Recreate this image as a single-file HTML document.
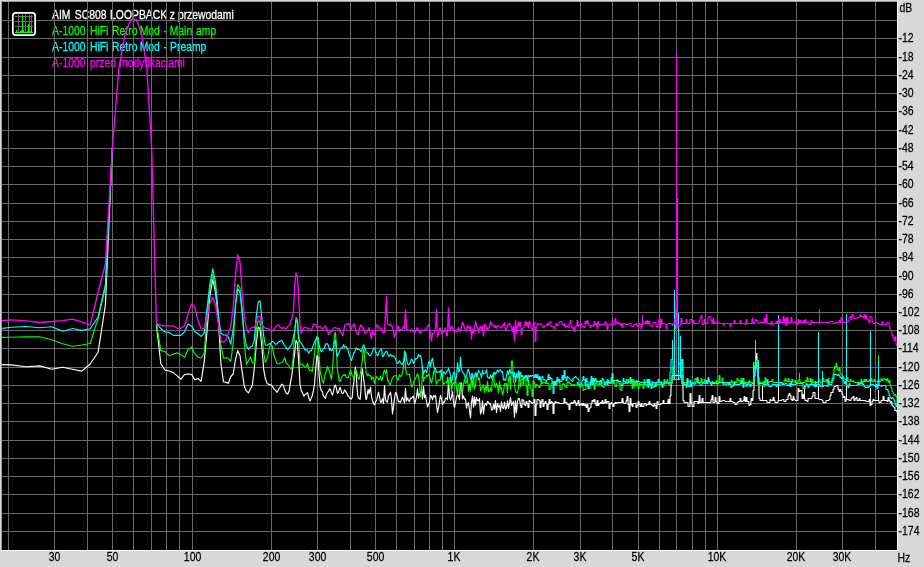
<!DOCTYPE html>
<html lang="pl"><head><meta charset="utf-8"><title>Spectrum</title>
<style>
html,body{margin:0;padding:0;background:#d8d8d8;overflow:hidden}
svg{display:block;will-change:transform}
text{font-family:"Liberation Sans",Arial,sans-serif;font-size:13px}
</style></head><body>
<svg width="924" height="567" viewBox="0 0 924 567">
<rect x="0" y="0" width="924" height="567" fill="#d8d8d8"/>
<rect x="1" y="1" width="897" height="550" fill="#ffffff"/>
<rect x="1" y="1" width="896" height="549" fill="#9a9a9a"/>
<rect x="2" y="2" width="895" height="548" fill="#000000"/>
<defs><clipPath id="plot"><rect x="2" y="2" width="895" height="548"/></clipPath></defs>
<g clip-path="url(#plot)">
<text transform="translate(0,19) scale(0.797,1)" fill="#ffffff" stroke="#ffffff" stroke-width="0.3"><tspan x="65.37">AIM</tspan> <tspan x="93.85">SC808</tspan> <tspan x="138.14">LOOPBACK</tspan> <tspan x="212.92">z</tspan> <tspan x="223.21">przewodami</tspan></text>
<text transform="translate(0,35) scale(0.797,1)" fill="#00ff00" stroke="#00ff00" stroke-width="0.3"><tspan x="65.37">A-1000</tspan> <tspan x="112.92">HiFi</tspan> <tspan x="140.65">Retro</tspan> <tspan x="175.28">Mod</tspan> <tspan x="205.27">-</tspan> <tspan x="212.92">Main</tspan> <tspan x="246.05">amp</tspan></text>
<text transform="translate(0,51) scale(0.797,1)" fill="#00ffff" stroke="#00ffff" stroke-width="0.3"><tspan x="65.37">A-1000</tspan> <tspan x="112.92">HiFi</tspan> <tspan x="140.65">Retro</tspan> <tspan x="175.28">Mod</tspan> <tspan x="205.27">-</tspan> <tspan x="213.43">Preamp</tspan></text>
<text transform="translate(0,67) scale(0.797,1)" fill="#ff00ff" stroke="#ff00ff" stroke-width="0.3"><tspan x="65.37">A-1000</tspan> <tspan x="112.92">przed</tspan> <tspan x="149.56">modyfikacjami</tspan></text>
<path d="M8.5 2V550M54.5 2V550M87.5 2V550M112.5 2V550M133.5 2V550M151.5 2V550M166.5 2V550M179.5 2V550M192.5 2V550M271.5 2V550M317.5 2V550M350.5 2V550M375.5 2V550M396.5 2V550M414.5 2V550M429.5 2V550M442.5 2V550M454.5 2V550M533.5 2V550M580.5 2V550M612.5 2V550M638.5 2V550M659.5 2V550M676.5 2V550M692.5 2V550M705.5 2V550M717.5 2V550M796.5 2V550M842.5 2V550M875.5 2V550M2 20.5H897M2 38.5H897M2 57.5H897M2 75.5H897M2 93.5H897M2 111.5H897M2 130.5H897M2 148.5H897M2 166.5H897M2 184.5H897M2 203.5H897M2 221.5H897M2 239.5H897M2 257.5H897M2 276.5H897M2 294.5H897M2 312.5H897M2 330.5H897M2 348.5H897M2 367.5H897M2 385.5H897M2 403.5H897M2 421.5H897M2 440.5H897M2 458.5H897M2 476.5H897M2 494.5H897M2 513.5H897M2 531.5H897" stroke="#6a6a6a" stroke-width="1" fill="none" shape-rendering="crispEdges"/>
<polyline points="-6.5,364.3 11.1,364.9 26.3,366.8 39.7,365.9 51.8,369.2 62.7,367.2 72.6,369.2 81.7,371.1 90.2,364.0 98.1,352.2 105.4,305.0 112.3,148.5" fill="none" stroke="#ffffff" stroke-width="1.15" stroke-linejoin="round"/>
<polyline points="156.4,325.0 160.8,363.5 165.1,370.3 169.3,371.0 173.3,372.6 177.2,375.9 180.9,379.2 184.5,374.6 188.0,374.0 191.5,374.2 194.8,379.8 198.0,378.5 201.1,381.4 204.2,362.2 207.1,330.0 210.0,295.0 212.8,279.4 215.6,293.0 218.3,318.0 220.9,363.5 223.5,381.8 226.0,382.4 228.4,383.3 230.8,376.5 233.2,374.0 235.5,359.6 237.7,350.4 240.0,355.7 242.1,371.3 244.3,386.3 246.4,390.9 248.4,392.9 250.4,389.0 252.4,385.0 254.4,367.4 256.3,344.0 258.2,327.0 260.0,328.6 261.9,346.7 263.7,369.5 265.4,378.8 267.2,383.6 268.9,384.4 270.6,384.7 272.2,386.0 273.9,388.8 275.5,390.4 277.1,392.3 278.7,389.2 280.2,387.0 281.8,384.1 283.3,385.4 284.8,390.1 286.2,393.1 287.7,394.1 289.1,391.1 290.5,382.6 291.9,374.8 293.3,363.0 294.7,353.1 296.0,340.3 297.4,342.7 298.7,361.6 300.0,384.4 301.3,390.9 302.6,393.1 303.8,396.1 305.1,394.6 306.3,393.9 307.5,392.7 308.7,397.5 309.9,400.9 311.1,398.5 312.3,395.6 313.4,390.6 314.6,383.4 315.7,369.9 316.9,355.7 318.0,357.2 319.1,375.0 320.2,387.1 321.2,390.3 322.3,391.7 323.4,395.8 324.4,397.1 325.5,398.3 326.5,394.3 327.5,392.5 328.5,391.2 329.5,388.9 330.5,389.7 331.5,392.9 332.5,394.9 333.5,391.3 334.4,386.7 335.4,385.1 336.4,388.2 337.3,393.2 338.2,392.8 339.1,389.9 340.1,387.3 341.0,390.0 341.9,393.3 342.8,393.4 343.7,392.5 344.5,389.8 345.4,391.2 346.3,392.4 347.1,393.8 348.0,396.0 348.8,396.4 349.7,398.1 350.5,398.2 351.4,399.1 352.2,397.3 353.0,387.9 353.8,382.8 354.6,375.5 355.4,367.1 356.2,373.4 357.0,387.6 357.8,395.8 358.6,398.2 359.3,398.4 360.1,399.5 360.9,391.0 361.6,374.5 362.4,368.7 363.1,375.0 363.9,380.8 364.6,385.4 365.4,394.4 366.1,399.6 366.8,398.0 367.5,392.6 368.2,389.5 369.0,393.9 370.5,387.4 371.5,396.3 372.5,400.9 373.5,403.0 374.5,405.0 375.5,402.0 376.5,400.6 377.5,396.6 378.5,392.2 379.5,397.0 380.5,402.3 381.5,401.9 382.5,398.5 383.5,403.5 384.5,385.7 385.5,399.4 386.5,401.7 387.5,402.0 388.5,395.2 389.5,394.6 390.5,392.1 391.5,399.3 392.5,413.9 393.5,406.3 394.5,398.6 395.5,392.6 396.5,393.4 397.5,397.8 398.5,401.8 399.5,401.4 400.5,402.4 401.5,399.6 402.5,397.1 403.5,399.5 404.5,403.2 405.5,388.3 406.5,401.2 407.5,398.0 408.5,400.3 409.5,401.6 410.5,398.2 411.5,398.5 412.5,397.2 413.5,396.0 414.5,403.4 415.5,401.2 416.5,396.8 417.5,388.9 418.5,398.2 419.5,393.6 420.5,393.1 421.5,389.6 422.5,399.0 423.5,386.4 424.5,397.6 425.5,395.2 426.5,401.3 427.5,406.8 428.5,404.8 429.5,402.0 430.5,395.3 431.5,396.3 432.5,399.8 433.5,395.6 434.5,396.9 435.5,395.4 436.5,404.1 437.5,412.4 438.5,407.7 439.5,401.4 440.5,395.3 441.5,399.1 442.5,404.7 443.5,402.0 444.5,402.3 445.5,398.6 446.5,398.0 447.5,399.7 448.5,380.5 449.5,397.2 450.5,400.1 451.5,396.9 452.5,391.7 453.5,402.5 454.5,407.6 455.5,402.5 456.5,397.5 457.5,394.2 458.5,395.6 459.5,399.8 460.5,383.0 461.5,383.0 462.5,398.8 463.5,395.9 464.5,399.3 465.5,399.0 466.5,408.1 467.5,404.1 468.5,402.6 469.5,410.2 470.5,417.8 471.5,402.0 472.5,396.1 473.5,407.2 474.5,396.9 475.5,405.1 476.5,397.6 477.5,400.4 478.5,401.0 479.5,398.4 480.5,414.0 481.5,411.1 482.5,400.8 483.5,414.0 484.5,405.5 485.5,403.6 486.5,405.3 487.5,401.4 488.5,402.3 489.5,404.1 490.5,403.7 491.5,410.0 492.5,409.8 493.5,404.3 494.5,409.2 495.5,400.6 496.5,412.7 497.5,403.5 498.5,407.2 499.5,405.2 500.5,411.4 501.5,401.8 502.5,407.6 503.5,408.6 504.5,402.2 505.5,409.1 506.5,407.5 507.5,400.9 508.5,408.5 509.5,403.1 510.5,397.6 511.5,405.4 512.5,403.4 513.5,401.3 514.5,417.2 515.5,400.8 516.5,412.7 517.5,400.7 518.5,398.3 519.5,398.9 520.5,405.9" fill="none" stroke="#ffffff" stroke-width="1.15" stroke-linejoin="round"/>
<polyline points="520.1,405.5 520.9,405.5 521.1,407.5 521.9,407.5 522.1,399.5 522.9,399.5 523.1,400.5 523.9,400.5 524.1,404.5 524.9,404.5 525.1,405.5 525.9,405.5 526.1,401.5 526.9,401.5 527.1,403.5 527.9,403.5 528.1,407.5 528.9,407.5 529.1,400.5 529.9,400.5 530.1,401.5 530.9,401.5 531.1,402.5 531.9,402.5 532.1,403.5 532.9,403.5 533.1,402.5 533.9,402.5 534.1,399.5 534.9,399.5 535.1,415.5 535.9,415.5 536.1,404.5 536.9,404.5 537.1,399.5 537.9,399.5 538.1,399.5 538.9,399.5 539.1,400.5 539.9,400.5 540.1,407.5 540.9,407.5 541.1,401.5 541.9,401.5 542.1,399.5 542.9,399.5 543.1,406.5 543.9,406.5 544.1,403.5 544.9,403.5 545.1,401.5 545.9,401.5 546.1,403.5 546.9,403.5 547.1,409.5 547.9,409.5 548.1,404.5 548.9,404.5 549.1,399.5 549.9,399.5 550.1,403.5 550.9,403.5 551.1,401.5 551.9,401.5 552.1,402.5 552.9,402.5 553.1,413.5 553.9,413.5 554.1,403.5 554.9,403.5 555.1,401.5 555.9,401.5 556.1,402.5 556.9,402.5 557.1,402.5 557.9,402.5 558.1,402.5 558.9,402.5 559.1,403.5 559.9,403.5 560.1,403.5 560.9,403.5 561.1,403.5 561.9,403.5 562.1,403.5 562.9,403.5 563.1,403.5 563.9,403.5 564.1,398.5 564.9,398.5 565.1,402.5 565.9,402.5 566.1,402.5 566.9,402.5 567.1,404.5 567.9,404.5 568.1,404.5 568.9,404.5 569.1,409.5 569.9,409.5 570.1,403.5 570.9,403.5 571.1,402.5 571.9,402.5 572.1,403.5 572.9,403.5 573.1,402.5 573.9,402.5 574.1,400.5 574.9,400.5 575.1,402.5 575.9,402.5 576.1,405.5 576.9,405.5 577.1,403.5 577.9,403.5 578.1,400.5 578.9,400.5 579.1,405.5 579.9,405.5 580.1,404.5 580.9,404.5 581.1,403.5 581.9,403.5 582.1,405.5 582.9,405.5 583.1,403.5 583.9,403.5 584.1,405.5 584.9,405.5 585.1,404.5 585.9,404.5 586.1,407.5 586.9,407.5 587.1,404.5 587.9,404.5 588.1,411.5 588.9,411.5 589.1,408.5 589.9,408.5 590.1,407.5 590.9,407.5 591.1,403.5 591.9,403.5 592.1,400.5 592.9,400.5 593.1,401.5 593.9,401.5 594.1,399.5 594.9,399.5 595.1,403.5 595.9,403.5 596.1,405.5 596.9,405.5 597.1,400.5 597.9,400.5 598.1,405.5 598.9,405.5 599.1,403.5 599.9,403.5 600.1,402.5 600.9,402.5 601.1,403.5 601.9,403.5 602.1,400.5 602.9,400.5 603.1,403.5 603.9,403.5 604.1,402.5 604.9,402.5 605.1,399.5 605.9,399.5 606.1,403.5 606.9,403.5 607.1,401.5 607.9,401.5 608.1,401.5 608.9,401.5 609.1,408.5 609.9,408.5 610.1,403.5 610.9,403.5 611.1,402.5 611.9,402.5 612.1,404.5 612.9,404.5 613.1,406.5 613.9,406.5 614.1,403.5 614.9,403.5 615.1,402.5 615.9,402.5 616.1,403.5 616.9,403.5 617.1,402.5 617.9,402.5 618.1,402.5 618.9,402.5 619.1,402.5 619.9,402.5 620.1,402.5 620.9,402.5 621.1,402.5 621.9,402.5 622.1,398.5 622.9,398.5 623.1,402.5 623.9,402.5 624.1,403.5 624.9,403.5 625.1,403.5 625.9,403.5 626.1,400.5 626.9,400.5 627.1,396.5 627.9,396.5 628.1,404.5 628.9,404.5 629.1,411.5 629.9,411.5 630.1,398.5 630.9,398.5 631.1,404.5 631.9,404.5 632.1,406.5 632.9,406.5 633.1,403.5 633.9,403.5 634.1,403.5 634.9,403.5 635.1,403.5 635.9,403.5 636.1,407.5 636.9,407.5 637.1,405.5 637.9,405.5 638.1,401.5 638.9,401.5 639.1,404.5 639.9,404.5 640.1,406.5 640.9,406.5 641.1,403.5 641.9,403.5 642.1,406.5 642.9,406.5 643.1,406.5 643.9,406.5 644.1,403.5 644.9,403.5 645.1,403.5 645.9,403.5 646.1,405.5 646.9,405.5 647.1,404.5 647.9,404.5 648.1,404.5 648.9,404.5 649.1,401.5 649.9,401.5 650.1,404.5 650.9,404.5 651.1,404.5 651.9,404.5 652.1,405.5 652.9,405.5 653.1,406.5 653.9,406.5 654.1,403.5 654.9,403.5 655.1,405.5 655.9,405.5 656.1,408.5 656.9,408.5 657.1,401.5 657.9,401.5 658.1,404.5 658.9,404.5 659.1,404.5 659.9,404.5 660.1,404.5 660.9,404.5 661.1,403.5 661.9,403.5 662.1,403.5 662.9,403.5 663.1,400.5 663.9,400.5 664.1,403.5 664.9,403.5 665.1,403.5 665.9,403.5 666.1,403.5 666.9,403.5 667.1,403.5 667.9,403.5 668.1,399.5 668.9,399.5 669.1,403.5 669.9,403.5 670.1,395.5 670.9,395.5 671.1,383.5 671.9,383.5 672.1,375.5 672.9,375.5 673.1,375.5 673.9,375.5 674.1,375.5 674.9,375.5 675.1,375.5 675.9,375.5 676.1,375.5 676.9,375.5 677.1,375.5 677.9,375.5 678.1,375.5 678.9,375.5 679.1,375.5 679.9,375.5 680.1,375.5 680.9,375.5 681.1,375.5 681.9,375.5 682.1,383.5 682.9,383.5 683.1,400.5 683.9,400.5 684.1,402.5 684.9,402.5 685.1,402.5 685.9,402.5 686.1,402.5 686.9,402.5 687.1,402.5 687.9,402.5 688.1,406.5 688.9,406.5 689.1,406.5 689.9,406.5 690.1,393.5 690.9,393.5 691.1,402.5 691.9,402.5 692.1,406.5 692.9,406.5 693.1,406.5 693.9,406.5 694.1,401.5 694.9,401.5 695.1,401.5 695.9,401.5 696.1,401.5 696.9,401.5 697.1,401.5 697.9,401.5 698.1,403.5 698.9,403.5 699.1,395.5 699.9,395.5 700.1,402.5 700.9,402.5 701.1,402.5 701.9,402.5 702.1,398.5 702.9,398.5 703.1,402.5 703.9,402.5 704.1,402.5 704.9,402.5 705.1,402.5 705.9,402.5 706.1,402.5 706.9,402.5 707.1,402.5 707.9,402.5 708.1,402.5 708.9,402.5 709.1,402.5 709.9,402.5 710.1,402.5 710.9,402.5 711.1,399.5 711.9,399.5 712.1,395.5 712.9,395.5 713.1,402.5 713.9,402.5 714.1,402.5 714.9,402.5 715.1,397.5 715.9,397.5 716.1,401.5 716.9,401.5 717.1,403.5 717.9,403.5 718.1,403.5 718.9,403.5 719.1,396.5 719.9,396.5 720.1,401.5 720.9,401.5 721.1,401.5 721.9,401.5 722.1,400.5 722.9,400.5 723.1,400.5 723.9,400.5 724.1,400.5 724.9,400.5 725.1,401.5 725.9,401.5 726.1,401.5 726.9,401.5 727.1,401.5 727.9,401.5 728.1,401.5 728.9,401.5 729.1,401.5 729.9,401.5 730.1,398.5 730.9,398.5 731.1,401.5 731.9,401.5 732.1,401.5 732.9,401.5 733.1,402.5 733.9,402.5 734.1,402.5 734.9,402.5 735.1,404.5 735.9,404.5 736.1,404.5 736.9,404.5 737.1,402.5 737.9,402.5 738.1,401.5 738.9,401.5 739.1,401.5 739.9,401.5 740.1,398.5 740.9,398.5 741.1,401.5 741.9,401.5 742.1,401.5 742.9,401.5 743.1,400.5 743.9,400.5 744.1,396.5 744.9,396.5 745.1,401.5 745.9,401.5 746.1,397.5 746.9,397.5 747.1,401.5 747.9,401.5 748.1,401.5 748.9,401.5 749.1,405.5 749.9,405.5 750.1,404.5 750.9,404.5 751.1,398.5 751.9,398.5 752.1,400.5 752.9,400.5 753.1,390.5 753.9,390.5 754.1,376.5 754.9,376.5 755.1,365.5 755.9,365.5 756.1,353.5 756.9,353.5 757.1,368.5 757.9,368.5 758.1,377.5 758.9,377.5 759.1,398.5 759.9,398.5 760.1,400.5 760.9,400.5 761.1,400.5 761.9,400.5 762.1,400.5 762.9,400.5 763.1,400.5 763.9,400.5 764.1,400.5 764.9,400.5 765.1,400.5 765.9,400.5 766.1,400.5 766.9,400.5 767.1,402.5 767.9,402.5 768.1,402.5 768.9,402.5 769.1,402.5 769.9,402.5 770.1,399.5 770.9,399.5 771.1,400.5 771.9,400.5 772.1,400.5 772.9,400.5 773.1,397.5 773.9,397.5 774.1,400.5 774.9,400.5 775.1,402.5 775.9,402.5 776.1,402.5 776.9,402.5 777.1,402.5 777.9,402.5 778.1,400.5 778.9,400.5 779.1,400.5 779.9,400.5 780.1,400.5 780.9,400.5 781.1,400.5 781.9,400.5 782.1,399.5 782.9,399.5 783.1,399.5 783.9,399.5 784.1,401.5 784.9,401.5 785.1,401.5 785.9,401.5 786.1,399.5 786.9,399.5 787.1,399.5 787.9,399.5 788.1,395.5 788.9,395.5 789.1,393.5 789.9,393.5 790.1,395.5 790.9,395.5 791.1,399.5 791.9,399.5 792.1,400.5 792.9,400.5 793.1,396.5 793.9,396.5 794.1,399.5 794.9,399.5 795.1,400.5 795.9,400.5 796.1,400.5 796.9,400.5 797.1,400.5 797.9,400.5 798.1,388.5 798.9,388.5 799.1,391.5 799.9,391.5 800.1,390.5 800.9,390.5 801.1,390.5 801.9,390.5 802.1,398.5 802.9,398.5 803.1,394.5 803.9,394.5 804.1,398.5 804.9,398.5 805.1,400.5 805.9,400.5 806.1,400.5 806.9,400.5 807.1,401.5 807.9,401.5 808.1,398.5 808.9,398.5 809.1,398.5 809.9,398.5 810.1,398.5 810.9,398.5 811.1,398.5 811.9,398.5 812.1,396.5 812.9,396.5 813.1,392.5 813.9,392.5 814.1,392.5 814.9,392.5 815.1,398.5 815.9,398.5 816.1,398.5 816.9,398.5 817.1,398.5 817.9,398.5 818.1,398.5 818.9,398.5 819.1,399.5 819.9,399.5 820.1,399.5 820.9,399.5 821.1,399.5 821.9,399.5 822.1,400.5 822.9,400.5 823.1,402.5 823.9,402.5 824.1,402.5 824.9,402.5 825.1,402.5 825.9,402.5 826.1,400.5 826.9,400.5 827.1,400.5 827.9,400.5 828.1,400.5 828.9,400.5 829.1,399.5 829.9,399.5 830.1,395.5 830.9,395.5 831.1,392.5 831.9,392.5 832.1,392.5 832.9,392.5 833.1,389.5 833.9,389.5 834.1,386.5 834.9,386.5 835.1,386.5 835.9,386.5 836.1,385.5 836.9,385.5 837.1,385.5 837.9,385.5 838.1,389.5 838.9,389.5 839.1,391.5 839.9,391.5 840.1,389.5 840.9,389.5 841.1,391.5 841.9,391.5 842.1,394.5 842.9,394.5 843.1,397.5 843.9,397.5 844.1,396.5 844.9,396.5 845.1,401.5 845.9,401.5 846.1,399.5 846.9,399.5 847.1,399.5 847.9,399.5 848.1,399.5 848.9,399.5 849.1,400.5 849.9,400.5 850.1,400.5 850.9,400.5 851.1,398.5 851.9,398.5 852.1,397.5 852.9,397.5 853.1,396.5 853.9,396.5 854.1,400.5 854.9,400.5 855.1,398.5 855.9,398.5 856.1,397.5 856.9,397.5 857.1,400.5 857.9,400.5 858.1,400.5 858.9,400.5 859.1,398.5 859.9,398.5 860.1,400.5 860.9,400.5 861.1,400.5 861.9,400.5 862.1,400.5 862.9,400.5 863.1,400.5 863.9,400.5 864.1,400.5 864.9,400.5 865.1,400.5 865.9,400.5 866.1,401.5 866.9,401.5 867.1,401.5 867.9,401.5 868.1,401.5 868.9,401.5 869.1,399.5 869.9,399.5 870.1,405.5 870.9,405.5 871.1,404.5 871.9,404.5 872.1,401.5 872.9,401.5 873.1,399.5 873.9,399.5 874.1,400.5 874.9,400.5 875.1,400.5 875.9,400.5 876.1,400.5 876.9,400.5 877.1,400.5 877.9,400.5 878.1,400.5 878.9,400.5 879.1,402.5 879.9,402.5 880.1,402.5 880.9,402.5 881.1,400.5 881.9,400.5 882.1,400.5 882.9,400.5 883.1,396.5 883.9,396.5 884.1,400.5 884.9,400.5 885.1,400.5 885.9,400.5 886.1,400.5 886.9,400.5 887.1,401.5 887.9,401.5 888.1,397.5 888.9,397.5 889.1,400.5 889.9,400.5 890.1,402.5 890.9,402.5 891.1,401.5 891.9,401.5 892.1,405.5 892.9,405.5 893.1,406.5 893.9,406.5 894.1,407.5 894.9,407.5 895.1,410.5 895.9,410.5 896.1,410.5 896.9,410.5 897.1,412.5 897.9,412.5" fill="none" stroke="#ffffff" stroke-width="1.15" stroke-linejoin="round"/>
<path d="M804.5 385.5V398.7M762.5 385.6V400.5M778.5 385.6V400.5M818.5 385.6V398.9M846.5 385.6V399.6M870.5 387.6V405.2M878.5 390.3V400.6" stroke="#ffffff" stroke-width="1" fill="none" shape-rendering="crispEdges"/>
<polyline points="-6.5,337.6 11.1,337.2 26.3,336.8 39.7,336.8 51.8,339.8 62.7,343.7 72.6,346.3 81.7,345.0 90.2,343.5 98.1,318.3 105.4,287.0 112.3,148.5" fill="none" stroke="#00ff00" stroke-width="1.15" stroke-linejoin="round"/>
<polyline points="156.4,323.3 160.8,350.4 165.1,351.7 169.3,355.9 173.3,354.1 177.2,352.7 180.9,354.8 184.5,357.4 188.0,349.8 191.5,347.2 194.8,353.7 198.0,357.0 201.1,358.0 204.2,353.0 207.1,316.0 210.0,288.0 212.8,274.2 215.6,288.0 218.3,313.5 220.9,345.2 223.5,358.3 226.0,357.6 228.4,358.3 230.8,361.5 233.2,342.6 235.5,303.0 237.7,284.6 240.0,288.0 242.1,309.6 244.3,342.6 246.4,364.2 248.4,360.9 250.4,357.0 252.4,362.8 254.4,363.5 256.3,329.0 258.2,321.0 260.0,321.0 261.9,336.5 263.7,352.9 265.4,362.3 267.2,358.5 268.9,350.5 270.6,343.9 272.2,345.8 273.9,355.1 275.5,359.6 277.1,363.7 278.7,364.0 280.2,362.8 281.8,362.7 283.3,360.5 284.8,357.6 286.2,363.0 287.7,364.3 289.1,366.0 290.5,368.6 291.9,368.7 293.3,356.6 294.7,330.6 296.0,317.4 297.4,319.8 298.7,338.7 300.0,364.8 301.3,364.3 302.6,364.0 303.8,366.1 305.1,367.1 306.3,366.6 307.5,363.2 308.7,368.8 309.9,370.5 311.1,370.3 312.3,371.7 313.4,362.7 314.6,352.7 315.7,342.6 316.9,336.3 318.0,337.8 319.1,355.6 320.2,372.2 321.2,376.1 322.3,380.6 323.4,383.2 324.4,377.3 325.5,372.9 326.5,370.9 327.5,366.5 328.5,368.7 329.5,371.2 330.5,376.4 331.5,379.4 332.5,368.7 333.5,354.5 334.4,335.1 335.4,332.4 336.4,345.2 337.3,369.0 338.2,374.1 339.1,380.8 340.1,381.6 341.0,378.9 341.9,376.6 342.8,375.7 343.7,374.7 344.5,375.3 345.4,374.5 346.3,377.4 347.1,377.5 348.0,378.0 348.8,376.1 349.7,372.8 350.5,369.9 351.4,372.8 352.2,375.8 353.0,376.0 353.8,379.5 354.6,374.6 355.4,369.8 356.2,370.4 357.0,372.1 357.8,376.6 358.6,379.1 359.3,379.2 360.1,374.5 360.9,370.1 361.6,365.5 362.4,360.2 363.1,350.4 363.9,348.5 364.6,357.4 365.4,365.2 366.1,372.4 366.8,374.5 367.5,375.8 368.2,373.7 369.0,375.4 370.5,375.6 371.5,379.5 372.5,376.9 373.5,377.6 374.5,383.4 375.5,379.3 376.5,376.7 377.5,377.3 378.5,379.6 379.5,379.4 380.5,376.3 381.5,380.7 382.5,379.0 383.5,372.2 384.5,370.3 385.5,373.6 386.5,369.4 387.5,380.6 388.5,380.6 389.5,384.0 390.5,384.8 391.5,380.6 392.5,378.3 393.5,376.4 394.5,375.7 395.5,375.7 396.5,376.3 397.5,379.9 398.5,379.9 399.5,374.7 400.5,376.5 401.5,375.5 402.5,372.6 403.5,366.8 404.5,350.9 405.5,367.4 406.5,374.1 407.5,374.3 408.5,374.5 409.5,374.0 410.5,380.6 411.5,386.9 412.5,386.4 413.5,382.4 414.5,379.7 415.5,379.0 416.5,375.9 417.5,373.7 418.5,376.3 419.5,384.6 420.5,397.0 421.5,390.4 422.5,366.0 423.5,381.3 424.5,377.6 425.5,377.7 426.5,375.2 427.5,376.3 428.5,374.4 429.5,376.2 430.5,380.0 431.5,383.0 432.5,378.6 433.5,372.6 434.5,368.9 435.5,377.6 436.5,384.3 437.5,382.0 438.5,379.6 439.5,380.1 440.5,379.7 441.5,369.9 442.5,379.4 443.5,384.2 444.5,383.5 445.5,382.3 446.5,382.7 447.5,377.1 448.5,384.4 449.5,377.6 450.5,378.1 451.5,391.4 452.5,384.1 453.5,382.5 454.5,384.6 455.5,378.0 456.5,387.8 457.5,395.4 458.5,385.0 459.5,382.6 460.5,383.2 461.5,389.8 462.5,390.8 463.5,384.3 464.5,378.9 465.5,383.5 466.5,382.0 467.5,377.8 468.5,391.4 469.5,384.3 470.5,391.2 471.5,373.5 472.5,387.0 473.5,378.3 474.5,388.9 475.5,386.1 476.5,373.1 477.5,373.9 478.5,379.8 479.5,378.0 480.5,390.8 481.5,388.1 482.5,387.0 483.5,384.7 484.5,392.5 485.5,386.3 486.5,390.8 487.5,381.3 488.5,391.5 489.5,391.8 490.5,387.8 491.5,391.4 492.5,378.1 493.5,372.3 494.5,385.9 495.5,387.2 496.5,383.0 497.5,385.8 498.5,393.0 499.5,381.3 500.5,388.6 501.5,387.6 502.5,394.9 503.5,391.7 504.5,383.6 505.5,384.1 506.5,383.5 507.5,393.0 508.5,378.4 509.5,376.4 510.5,389.6 511.5,361.0 512.5,361.0 513.5,382.6 514.5,383.7 515.5,391.4 516.5,392.6 517.5,393.0 518.5,387.7 519.5,372.0 520.5,386.4" fill="none" stroke="#00ff00" stroke-width="1.15" stroke-linejoin="round"/>
<polyline points="520.1,386.5 520.9,386.5 521.1,379.5 521.9,379.5 522.1,378.5 522.9,378.5 523.1,384.5 523.9,384.5 524.1,376.5 524.9,376.5 525.1,375.5 525.9,375.5 526.1,386.5 526.9,386.5 527.1,395.5 527.9,395.5 528.1,380.5 528.9,380.5 529.1,384.5 529.9,384.5 530.1,387.5 530.9,387.5 531.1,389.5 531.9,389.5 532.1,396.5 532.9,396.5 533.1,380.5 533.9,380.5 534.1,383.5 534.9,383.5 535.1,387.5 535.9,387.5 536.1,384.5 536.9,384.5 537.1,385.5 537.9,385.5 538.1,386.5 538.9,386.5 539.1,387.5 539.9,387.5 540.1,385.5 540.9,385.5 541.1,380.5 541.9,380.5 542.1,383.5 542.9,383.5 543.1,382.5 543.9,382.5 544.1,382.5 544.9,382.5 545.1,383.5 545.9,383.5 546.1,381.5 546.9,381.5 547.1,383.5 547.9,383.5 548.1,383.5 548.9,383.5 549.1,389.5 549.9,389.5 550.1,388.5 550.9,388.5 551.1,383.5 551.9,383.5 552.1,381.5 552.9,381.5 553.1,383.5 553.9,383.5 554.1,383.5 554.9,383.5 555.1,381.5 555.9,381.5 556.1,385.5 556.9,385.5 557.1,380.5 557.9,380.5 558.1,381.5 558.9,381.5 559.1,382.5 559.9,382.5 560.1,389.5 560.9,389.5 561.1,389.5 561.9,389.5 562.1,384.5 562.9,384.5 563.1,383.5 563.9,383.5 564.1,384.5 564.9,384.5 565.1,386.5 565.9,386.5 566.1,387.5 566.9,387.5 567.1,382.5 567.9,382.5 568.1,381.5 568.9,381.5 569.1,383.5 569.9,383.5 570.1,383.5 570.9,383.5 571.1,385.5 571.9,385.5 572.1,384.5 572.9,384.5 573.1,385.5 573.9,385.5 574.1,384.5 574.9,384.5 575.1,385.5 575.9,385.5 576.1,385.5 576.9,385.5 577.1,382.5 577.9,382.5 578.1,384.5 578.9,384.5 579.1,386.5 579.9,386.5 580.1,387.5 580.9,387.5 581.1,385.5 581.9,385.5 582.1,384.5 582.9,384.5 583.1,390.5 583.9,390.5 584.1,389.5 584.9,389.5 585.1,389.5 585.9,389.5 586.1,384.5 586.9,384.5 587.1,384.5 587.9,384.5 588.1,387.5 588.9,387.5 589.1,384.5 589.9,384.5 590.1,381.5 590.9,381.5 591.1,384.5 591.9,384.5 592.1,384.5 592.9,384.5 593.1,379.5 593.9,379.5 594.1,389.5 594.9,389.5 595.1,383.5 595.9,383.5 596.1,380.5 596.9,380.5 597.1,384.5 597.9,384.5 598.1,384.5 598.9,384.5 599.1,381.5 599.9,381.5 600.1,384.5 600.9,384.5 601.1,384.5 601.9,384.5 602.1,386.5 602.9,386.5 603.1,387.5 603.9,387.5 604.1,385.5 604.9,385.5 605.1,385.5 605.9,385.5 606.1,383.5 606.9,383.5 607.1,379.5 607.9,379.5 608.1,382.5 608.9,382.5 609.1,383.5 609.9,383.5 610.1,383.5 610.9,383.5 611.1,377.5 611.9,377.5 612.1,383.5 612.9,383.5 613.1,380.5 613.9,380.5 614.1,383.5 614.9,383.5 615.1,386.5 615.9,386.5 616.1,386.5 616.9,386.5 617.1,379.5 617.9,379.5 618.1,380.5 618.9,380.5 619.1,383.5 619.9,383.5 620.1,389.5 620.9,389.5 621.1,390.5 621.9,390.5 622.1,384.5 622.9,384.5 623.1,383.5 623.9,383.5 624.1,383.5 624.9,383.5 625.1,383.5 625.9,383.5 626.1,379.5 626.9,379.5 627.1,383.5 627.9,383.5 628.1,379.5 628.9,379.5 629.1,381.5 629.9,381.5 630.1,383.5 630.9,383.5 631.1,379.5 631.9,379.5 632.1,388.5 632.9,388.5 633.1,379.5 633.9,379.5 634.1,386.5 634.9,386.5 635.1,384.5 635.9,384.5 636.1,385.5 636.9,385.5 637.1,382.5 637.9,382.5 638.1,388.5 638.9,388.5 639.1,383.5 639.9,383.5 640.1,384.5 640.9,384.5 641.1,384.5 641.9,384.5 642.1,384.5 642.9,384.5 643.1,388.5 643.9,388.5 644.1,379.5 644.9,379.5 645.1,384.5 645.9,384.5 646.1,384.5 646.9,384.5 647.1,386.5 647.9,386.5 648.1,379.5 648.9,379.5 649.1,384.5 649.9,384.5 650.1,384.5 650.9,384.5 651.1,384.5 651.9,384.5 652.1,381.5 652.9,381.5 653.1,387.5 653.9,387.5 654.1,386.5 654.9,386.5 655.1,386.5 655.9,386.5 656.1,383.5 656.9,383.5 657.1,384.5 657.9,384.5 658.1,384.5 658.9,384.5 659.1,384.5 659.9,384.5 660.1,384.5 660.9,384.5 661.1,381.5 661.9,381.5 662.1,384.5 662.9,384.5 663.1,384.5 663.9,384.5 664.1,379.5 664.9,379.5 665.1,383.5 665.9,383.5 666.1,383.5 666.9,383.5 667.1,379.5 667.9,379.5 668.1,382.5 668.9,382.5 669.1,384.5 669.9,384.5 670.1,382.5 670.9,382.5 671.1,383.5 671.9,383.5 672.1,377.5 672.9,377.5 673.2,366.5 674.5,366.5 674.5,330.0 675.5,328.0 676.5,320.0 677.5,322.0 678.5,330.0 678.5,364.5 679.8,364.5 680.1,362.5 680.9,362.5 681.1,359.5 681.9,359.5 682.1,375.5 682.9,375.5 683.1,383.5 683.9,383.5 684.1,382.5 684.9,382.5 685.1,382.5 685.9,382.5 686.1,387.5 686.9,387.5 687.1,379.5 687.9,379.5 688.1,380.5 688.9,380.5 689.1,382.5 689.9,382.5 690.1,382.5 690.9,382.5 691.1,382.5 691.9,382.5 692.1,382.5 692.9,382.5 693.1,382.5 693.9,382.5 694.1,382.5 694.9,382.5 695.1,378.5 695.9,378.5 696.1,379.5 696.9,379.5 697.1,377.5 697.9,377.5 698.1,382.5 698.9,382.5 699.1,382.5 699.9,382.5 700.1,382.5 700.9,382.5 701.1,378.5 701.9,378.5 702.1,382.5 702.9,382.5 703.1,382.5 703.9,382.5 704.1,379.5 704.9,379.5 705.1,381.5 705.9,381.5 706.1,381.5 706.9,381.5 707.1,381.5 707.9,381.5 708.1,379.5 708.9,379.5 709.1,381.5 709.9,381.5 710.1,382.5 710.9,382.5 711.1,382.5 711.9,382.5 712.1,382.5 712.9,382.5 713.1,382.5 713.9,382.5 714.1,382.5 714.9,382.5 715.1,382.5 715.9,382.5 716.1,380.5 716.9,380.5 717.1,384.5 717.9,384.5 718.1,382.5 718.9,382.5 719.1,375.5 719.9,375.5 720.1,382.5 720.9,382.5 721.1,382.5 721.9,382.5 722.1,378.5 722.9,378.5 723.1,382.5 723.9,382.5 724.1,382.5 724.9,382.5 725.1,384.5 725.9,384.5 726.1,384.5 726.9,384.5 727.1,382.5 727.9,382.5 728.1,382.5 728.9,382.5 729.1,382.5 729.9,382.5 730.1,382.5 730.9,382.5 731.1,380.5 731.9,380.5 732.1,382.5 732.9,382.5 733.1,384.5 733.9,384.5 734.1,384.5 734.9,384.5 735.1,382.5 735.9,382.5 736.1,382.5 736.9,382.5 737.1,378.5 737.9,378.5 738.1,380.5 738.9,380.5 739.1,380.5 739.9,380.5 740.1,383.5 740.9,383.5 741.1,378.5 741.9,378.5 742.1,382.5 742.9,382.5 743.1,378.5 743.9,378.5 744.1,382.5 744.9,382.5 745.1,382.5 745.9,382.5 746.1,382.5 746.9,382.5 747.1,382.5 747.9,382.5 748.1,382.5 748.9,382.5 749.1,380.5 749.9,380.5 750.1,382.5 750.9,382.5 751.1,382.5 751.9,382.5 752.1,382.5 752.9,382.5 753.1,382.5 753.9,382.5 754.1,366.5 754.9,366.5 755.1,362.5 755.9,362.5 756.1,360.5 756.9,360.5 757.1,368.5 757.9,368.5 758.1,384.5 758.9,384.5 759.1,385.5 759.9,385.5 760.1,382.5 760.9,382.5 761.1,382.5 761.9,382.5 762.1,383.5 762.9,383.5 763.1,381.5 763.9,381.5 764.1,386.5 764.9,386.5 765.1,377.5 765.9,377.5 766.1,382.5 766.9,382.5 767.1,382.5 767.9,382.5 768.1,382.5 768.9,382.5 769.1,381.5 769.9,381.5 770.1,381.5 770.9,381.5 771.1,381.5 771.9,381.5 772.1,379.5 772.9,379.5 773.1,382.5 773.9,382.5 774.1,382.5 774.9,382.5 775.1,382.5 775.9,382.5 776.1,382.5 776.9,382.5 777.1,382.5 777.9,382.5 778.1,382.5 778.9,382.5 779.1,382.5 779.9,382.5 780.1,382.5 780.9,382.5 781.1,382.5 781.9,382.5 782.1,383.5 782.9,383.5 783.1,383.5 783.9,383.5 784.1,380.5 784.9,380.5 785.1,378.5 785.9,378.5 786.1,381.5 786.9,381.5 787.1,381.5 787.9,381.5 788.1,378.5 788.9,378.5 789.1,381.5 789.9,381.5 790.1,381.5 790.9,381.5 791.1,381.5 791.9,381.5 792.1,379.5 792.9,379.5 793.1,381.5 793.9,381.5 794.1,382.5 794.9,382.5 795.1,380.5 795.9,380.5 796.1,382.5 796.9,382.5 797.1,382.5 797.9,382.5 798.1,380.5 798.9,380.5 799.1,379.5 799.9,379.5 800.1,382.5 800.9,382.5 801.1,382.5 801.9,382.5 802.1,382.5 802.9,382.5 803.1,382.5 803.9,382.5 804.1,382.5 804.9,382.5 805.1,380.5 805.9,380.5 806.1,381.5 806.9,381.5 807.1,377.5 807.9,377.5 808.1,381.5 808.9,381.5 809.1,381.5 809.9,381.5 810.1,378.5 810.9,378.5 811.1,383.5 811.9,383.5 812.1,379.5 812.9,379.5 813.1,382.5 813.9,382.5 814.1,382.5 814.9,382.5 815.1,382.5 815.9,382.5 816.1,382.5 816.9,382.5 817.1,382.5 817.9,382.5 818.1,380.5 818.9,380.5 819.1,379.5 819.9,379.5 820.1,382.5 820.9,382.5 821.1,382.5 821.9,382.5 822.1,381.5 822.9,381.5 823.1,378.5 823.9,378.5 824.1,381.5 824.9,381.5 825.1,381.5 825.9,381.5 826.1,379.5 826.9,379.5 827.1,382.5 827.9,382.5 828.1,378.5 828.9,378.5 829.1,382.5 829.9,382.5 830.1,382.5 830.9,382.5 831.1,382.5 831.9,382.5 832.1,378.5 832.9,378.5 833.1,373.5 833.9,373.5 834.1,368.5 834.9,368.5 835.1,367.5 835.9,367.5 836.1,363.5 836.9,363.5 837.1,369.5 837.9,369.5 838.1,370.5 838.9,370.5 839.1,367.5 839.9,367.5 840.1,373.5 840.9,373.5 841.1,374.5 841.9,374.5 842.1,375.5 842.9,375.5 843.1,377.5 843.9,377.5 844.1,378.5 844.9,378.5 845.1,379.5 845.9,379.5 846.1,380.5 846.9,380.5 847.1,377.5 847.9,377.5 848.1,381.5 848.9,381.5 849.1,381.5 849.9,381.5 850.1,379.5 850.9,379.5 851.1,381.5 851.9,381.5 852.1,381.5 852.9,381.5 853.1,380.5 853.9,380.5 854.1,382.5 854.9,382.5 855.1,382.5 855.9,382.5 856.1,382.5 856.9,382.5 857.1,382.5 857.9,382.5 858.1,383.5 858.9,383.5 859.1,382.5 859.9,382.5 860.1,382.5 860.9,382.5 861.1,379.5 861.9,379.5 862.1,383.5 862.9,383.5 863.1,381.5 863.9,381.5 864.1,379.5 864.9,379.5 865.1,381.5 865.9,381.5 866.1,379.5 866.9,379.5 867.1,381.5 867.9,381.5 868.1,381.5 868.9,381.5 869.1,379.5 869.9,379.5 870.1,381.5 870.9,381.5 871.1,378.5 871.9,378.5 872.1,381.5 872.9,381.5 873.1,381.5 873.9,381.5 874.1,379.5 874.9,379.5 875.1,381.5 875.9,381.5 876.1,381.5 876.9,381.5 877.1,381.5 877.9,381.5 878.1,379.5 878.9,379.5 879.1,381.5 879.9,381.5 880.1,381.5 880.9,381.5 881.1,378.5 881.9,378.5 882.1,380.5 882.9,380.5 883.1,379.5 883.9,379.5 884.1,378.5 884.9,378.5 885.1,379.5 885.9,379.5 886.1,380.5 886.9,380.5 887.1,378.5 887.9,378.5 888.1,382.5 888.9,382.5 889.1,380.5 889.9,380.5 890.1,385.5 890.9,385.5 891.1,387.5 891.9,387.5 892.1,391.5 892.9,391.5 893.1,393.5 893.9,393.5 894.1,395.5 894.9,395.5 895.1,394.5 895.9,394.5 896.1,396.5 896.9,396.5 897.1,402.5 897.9,402.5" fill="none" stroke="#00ff00" stroke-width="1.15" stroke-linejoin="round"/>
<path d="M878.5 354.5V379.1M799.5 373.0V379.9M834.5 366.0V369.0" stroke="#00ff00" stroke-width="1" fill="none" shape-rendering="crispEdges"/>
<polyline points="-6.5,329.6 11.1,327.2 26.3,326.5 39.7,327.8 51.8,326.8 62.7,331.3 72.6,328.5 81.7,330.4 90.2,328.7 98.1,317.0 105.4,285.0 112.3,148.5" fill="none" stroke="#00ffff" stroke-width="1.15" stroke-linejoin="round"/>
<polyline points="156.4,323.3 160.8,328.5 165.1,332.0 169.3,332.4 173.3,335.4 177.2,335.4 180.9,335.4 184.5,331.8 188.0,323.9 191.5,325.9 194.8,331.5 198.0,333.7 201.1,336.3 204.2,333.1 207.1,308.0 210.0,283.0 212.8,268.9 215.6,283.0 218.3,316.1 220.9,333.1 223.5,335.0 226.0,335.0 228.4,337.0 230.8,344.2 233.2,329.2 235.5,305.7 237.7,288.5 240.0,292.6 242.1,312.2 244.3,334.4 246.4,345.5 248.4,349.4 250.4,346.8 252.4,346.1 254.4,339.6 256.3,316.1 258.2,301.7 260.0,300.9 261.9,319.0 263.7,336.3 265.4,345.0 267.2,345.3 268.9,343.9 270.6,343.9 272.2,341.1 273.9,342.4 275.5,344.3 277.1,343.6 278.7,341.8 280.2,341.3 281.8,340.3 283.3,343.4 284.8,345.8 286.2,347.6 287.7,349.8 289.1,347.9 290.5,346.6 291.9,344.0 293.3,337.6 294.7,331.5 296.0,320.7 297.4,322.0 298.7,337.6 300.0,342.0 301.3,343.1 302.6,345.9 303.8,347.3 305.1,350.4 306.3,349.5 307.5,350.5 308.7,353.4 309.9,350.8 311.1,350.8 312.3,348.3 313.4,344.9 314.6,342.0 315.7,339.6 316.9,337.6 318.0,337.8 319.1,345.1 320.2,349.0 321.2,351.8 322.3,350.8 323.4,348.5 324.4,348.2 325.5,344.5 326.5,343.5 327.5,344.0 328.5,345.5 329.5,350.5 330.5,348.4 331.5,350.6 332.5,350.0 333.5,347.7 334.4,341.5 335.4,340.0 336.4,352.6 337.3,356.6 338.2,354.0 339.1,352.7 340.1,349.3 341.0,348.7 341.9,347.6 342.8,347.4 343.7,344.5 344.5,347.2 345.4,346.8 346.3,346.5 347.1,348.7 348.0,349.9 348.8,353.6 349.7,355.7 350.5,358.6 351.4,360.4 352.2,358.0 353.0,355.6 353.8,352.6 354.6,352.7 355.4,349.4 356.2,347.7 357.0,349.6 357.8,349.0 358.6,349.2 359.3,349.6 360.1,350.4 360.9,351.5 361.6,350.4 362.4,347.5 363.1,345.7 363.9,344.8 364.6,347.8 365.4,348.6 366.1,352.7 366.8,352.8 367.5,352.8 368.2,353.4 369.0,355.4 370.5,355.6 371.5,353.6 372.5,351.4 373.5,348.6 374.5,348.1 375.5,351.3 376.5,353.7 377.5,355.8 378.5,354.0 379.5,350.8 380.5,350.3 381.5,348.7 382.5,356.4 383.5,356.4 384.5,353.3 385.5,352.1 386.5,351.0 387.5,353.2 388.5,355.9 389.5,356.3 390.5,354.3 391.5,355.9 392.5,355.6 393.5,355.9 394.5,357.1 395.5,358.6 396.5,361.7 397.5,363.6 398.5,362.2 399.5,360.7 400.5,362.7 401.5,364.1 402.5,364.6 403.5,361.5 404.5,356.7 405.5,351.9 406.5,358.9 407.5,363.6 408.5,364.8 409.5,364.3 410.5,362.1 411.5,358.8 412.5,360.1 413.5,363.5 414.5,361.8 415.5,358.4 416.5,358.9 417.5,358.2 418.5,354.5 419.5,356.4 420.5,355.4 421.5,359.4 422.5,369.2 423.5,374.0 424.5,371.1 425.5,370.0 426.5,372.5 427.5,368.7 428.5,362.8 429.5,360.9 430.5,366.7 431.5,360.5 432.5,358.3 433.5,364.9 434.5,368.5 435.5,368.5 436.5,372.5 437.5,372.1 438.5,371.8 439.5,372.1 440.5,370.3 441.5,373.8 442.5,378.2 443.5,371.6 444.5,372.7 445.5,374.1 446.5,371.9 447.5,371.4 448.5,368.2 449.5,371.3 450.5,374.9 451.5,382.9 452.5,377.6 453.5,372.6 454.5,372.2 455.5,379.9 456.5,377.3 457.5,362.7 458.5,371.8 459.5,371.5 460.5,357.0 461.5,369.2 462.5,372.4 463.5,373.2 464.5,374.9 465.5,378.6 466.5,376.0 467.5,370.9 468.5,369.2 469.5,373.7 470.5,379.5 471.5,378.6 472.5,373.5 473.5,378.8 474.5,376.2 475.5,372.7 476.5,377.2 477.5,373.9 478.5,370.3 479.5,372.2 480.5,373.9 481.5,377.6 482.5,370.1 483.5,374.1 484.5,373.4 485.5,373.2 486.5,369.5 487.5,377.4 488.5,377.5 489.5,378.5 490.5,374.9 491.5,378.1 492.5,375.1 493.5,376.6 494.5,372.3 495.5,374.1 496.5,372.4 497.5,370.1 498.5,372.0 499.5,369.9 500.5,369.9 501.5,372.2 502.5,371.5 503.5,379.9 504.5,379.0 505.5,380.7 506.5,375.9 507.5,370.9 508.5,374.6 509.5,369.5 510.5,372.2 511.5,372.8 512.5,371.9 513.5,377.3 514.5,372.4 515.5,382.5 516.5,373.6 517.5,378.0 518.5,370.7 519.5,378.6 520.5,372.9" fill="none" stroke="#00ffff" stroke-width="1.15" stroke-linejoin="round"/>
<polyline points="520.1,372.5 520.9,372.5 521.1,376.5 521.9,376.5 522.1,375.5 522.9,375.5 523.1,378.5 523.9,378.5 524.1,377.5 524.9,377.5 525.1,377.5 525.9,377.5 526.1,375.5 526.9,375.5 527.1,380.5 527.9,380.5 528.1,375.5 528.9,375.5 529.1,376.5 529.9,376.5 530.1,375.5 530.9,375.5 531.1,376.5 531.9,376.5 532.1,375.5 532.9,375.5 533.1,375.5 533.9,375.5 534.1,377.5 534.9,377.5 535.1,374.5 535.9,374.5 536.1,377.5 536.9,377.5 537.1,374.5 537.9,374.5 538.1,379.5 538.9,379.5 539.1,376.5 539.9,376.5 540.1,380.5 540.9,380.5 541.1,377.5 541.9,377.5 542.1,376.5 542.9,376.5 543.1,379.5 543.9,379.5 544.1,379.5 544.9,379.5 545.1,380.5 545.9,380.5 546.1,380.5 546.9,380.5 547.1,379.5 547.9,379.5 548.1,374.5 548.9,374.5 549.1,379.5 549.9,379.5 550.1,377.5 550.9,377.5 551.1,378.5 551.9,378.5 552.1,381.5 552.9,381.5 553.1,393.5 553.9,393.5 554.1,381.5 554.9,381.5 555.1,384.5 555.9,384.5 556.1,380.5 556.9,380.5 557.1,377.5 557.9,377.5 558.1,381.5 558.9,381.5 559.1,379.5 559.9,379.5 560.1,381.5 560.9,381.5 561.1,381.5 561.9,381.5 562.1,375.5 562.9,375.5 563.1,379.5 563.9,379.5 564.1,370.5 564.9,370.5 565.1,377.5 565.9,377.5 566.1,380.5 566.9,380.5 567.1,376.5 567.9,376.5 568.1,377.5 568.9,377.5 569.1,378.5 569.9,378.5 570.1,379.5 570.9,379.5 571.1,380.5 571.9,380.5 572.1,381.5 572.9,381.5 573.1,378.5 573.9,378.5 574.1,377.5 574.9,377.5 575.1,376.5 575.9,376.5 576.1,377.5 576.9,377.5 577.1,378.5 577.9,378.5 578.1,379.5 578.9,379.5 579.1,384.5 579.9,384.5 580.1,384.5 580.9,384.5 581.1,383.5 581.9,383.5 582.1,380.5 582.9,380.5 583.1,376.5 583.9,376.5 584.1,379.5 584.9,379.5 585.1,385.5 585.9,385.5 586.1,378.5 586.9,378.5 587.1,381.5 587.9,381.5 588.1,388.5 588.9,388.5 589.1,388.5 589.9,388.5 590.1,382.5 590.9,382.5 591.1,376.5 591.9,376.5 592.1,384.5 592.9,384.5 593.1,378.5 593.9,378.5 594.1,381.5 594.9,381.5 595.1,378.5 595.9,378.5 596.1,380.5 596.9,380.5 597.1,381.5 597.9,381.5 598.1,381.5 598.9,381.5 599.1,381.5 599.9,381.5 600.1,380.5 600.9,380.5 601.1,383.5 601.9,383.5 602.1,378.5 602.9,378.5 603.1,379.5 603.9,379.5 604.1,384.5 604.9,384.5 605.1,382.5 605.9,382.5 606.1,381.5 606.9,381.5 607.1,384.5 607.9,384.5 608.1,380.5 608.9,380.5 609.1,382.5 609.9,382.5 610.1,382.5 610.9,382.5 611.1,381.5 611.9,381.5 612.1,373.5 612.9,373.5 613.1,381.5 613.9,381.5 614.1,380.5 614.9,380.5 615.1,380.5 615.9,380.5 616.1,380.5 616.9,380.5 617.1,380.5 617.9,380.5 618.1,381.5 618.9,381.5 619.1,381.5 619.9,381.5 620.1,381.5 620.9,381.5 621.1,385.5 621.9,385.5 622.1,385.5 622.9,385.5 623.1,378.5 623.9,378.5 624.1,381.5 624.9,381.5 625.1,382.5 625.9,382.5 626.1,382.5 626.9,382.5 627.1,382.5 627.9,382.5 628.1,382.5 628.9,382.5 629.1,381.5 629.9,381.5 630.1,377.5 630.9,377.5 631.1,381.5 631.9,381.5 632.1,381.5 632.9,381.5 633.1,381.5 633.9,381.5 634.1,381.5 634.9,381.5 635.1,383.5 635.9,383.5 636.1,380.5 636.9,380.5 637.1,381.5 637.9,381.5 638.1,381.5 638.9,381.5 639.1,381.5 639.9,381.5 640.1,382.5 640.9,382.5 641.1,382.5 641.9,382.5 642.1,382.5 642.9,382.5 643.1,382.5 643.9,382.5 644.1,382.5 644.9,382.5 645.1,382.5 645.9,382.5 646.1,382.5 646.9,382.5 647.1,379.5 647.9,379.5 648.1,387.5 648.9,387.5 649.1,379.5 649.9,379.5 650.1,384.5 650.9,384.5 651.1,388.5 651.9,388.5 652.1,382.5 652.9,382.5 653.1,382.5 653.9,382.5 654.1,382.5 654.9,382.5 655.1,386.5 655.9,386.5 656.1,382.5 656.9,382.5 657.1,382.5 657.9,382.5 658.1,379.5 658.9,379.5 659.1,382.5 659.9,382.5 660.1,382.5 660.9,382.5 661.1,382.5 661.9,382.5 662.1,387.5 662.9,387.5 663.1,384.5 663.9,384.5 664.1,381.5 664.9,381.5 665.1,381.5 665.9,381.5 666.1,382.5 666.9,382.5 667.1,382.5 667.9,382.5 668.1,383.5 668.9,383.5 669.1,383.5 669.9,383.5 670.1,372.5 670.9,372.5 671.1,359.5 671.9,359.5 672.1,359.5 672.9,359.5 673.1,379.5 673.9,379.5 674.1,379.5 674.9,379.5 675.1,379.5 675.9,379.5 676.1,379.5 676.9,379.5 677.1,379.5 677.9,379.5 678.1,379.5 678.9,379.5 679.1,379.5 679.9,379.5 680.1,377.5 680.9,377.5 681.1,370.5 681.9,370.5 682.1,359.5 682.9,359.5 683.1,382.5 683.9,382.5 684.1,384.5 684.9,384.5 685.1,384.5 685.9,384.5 686.1,385.5 686.9,385.5 687.1,378.5 687.9,378.5 688.1,386.5 688.9,386.5 689.1,386.5 689.9,386.5 690.1,380.5 690.9,380.5 691.1,386.5 691.9,386.5 692.1,383.5 692.9,383.5 693.1,383.5 693.9,383.5 694.1,384.5 694.9,384.5 695.1,383.5 695.9,383.5 696.1,381.5 696.9,381.5 697.1,378.5 697.9,378.5 698.1,382.5 698.9,382.5 699.1,383.5 699.9,383.5 700.1,385.5 700.9,385.5 701.1,385.5 701.9,385.5 702.1,383.5 702.9,383.5 703.1,382.5 703.9,382.5 704.1,383.5 704.9,383.5 705.1,383.5 705.9,383.5 706.1,380.5 706.9,380.5 707.1,383.5 707.9,383.5 708.1,377.5 708.9,377.5 709.1,381.5 709.9,381.5 710.1,383.5 710.9,383.5 711.1,385.5 711.9,385.5 712.1,381.5 712.9,381.5 713.1,383.5 713.9,383.5 714.1,383.5 714.9,383.5 715.1,383.5 715.9,383.5 716.1,383.5 716.9,383.5 717.1,383.5 717.9,383.5 718.1,383.5 718.9,383.5 719.1,382.5 719.9,382.5 720.1,382.5 720.9,382.5 721.1,382.5 721.9,382.5 722.1,382.5 722.9,382.5 723.1,384.5 723.9,384.5 724.1,382.5 724.9,382.5 725.1,382.5 725.9,382.5 726.1,382.5 726.9,382.5 727.1,382.5 727.9,382.5 728.1,384.5 728.9,384.5 729.1,382.5 729.9,382.5 730.1,384.5 730.9,384.5 731.1,387.5 731.9,387.5 732.1,386.5 732.9,386.5 733.1,385.5 733.9,385.5 734.1,381.5 734.9,381.5 735.1,384.5 735.9,384.5 736.1,384.5 736.9,384.5 737.1,384.5 737.9,384.5 738.1,384.5 738.9,384.5 739.1,384.5 739.9,384.5 740.1,383.5 740.9,383.5 741.1,383.5 741.9,383.5 742.1,381.5 742.9,381.5 743.1,387.5 743.9,387.5 744.1,382.5 744.9,382.5 745.1,383.5 745.9,383.5 746.1,386.5 746.9,386.5 747.1,384.5 747.9,384.5 748.1,382.5 748.9,382.5 749.1,384.5 749.9,384.5 750.1,386.5 750.9,386.5 751.1,384.5 751.9,384.5 752.1,383.5 752.9,383.5 753.1,383.5 753.9,383.5 754.1,372.5 754.9,372.5 755.1,366.5 755.9,366.5 756.1,364.5 756.9,364.5 757.1,369.5 757.9,369.5 758.1,383.5 758.9,383.5 759.1,383.5 759.9,383.5 760.1,383.5 760.9,383.5 761.1,383.5 761.9,383.5 762.1,383.5 762.9,383.5 763.1,384.5 763.9,384.5 764.1,384.5 764.9,384.5 765.1,384.5 765.9,384.5 766.1,384.5 766.9,384.5 767.1,379.5 767.9,379.5 768.1,384.5 768.9,384.5 769.1,386.5 769.9,386.5 770.1,386.5 770.9,386.5 771.1,386.5 771.9,386.5 772.1,384.5 772.9,384.5 773.1,384.5 773.9,384.5 774.1,384.5 774.9,384.5 775.1,384.5 775.9,384.5 776.1,386.5 776.9,386.5 777.1,384.5 777.9,384.5 778.1,385.5 778.9,385.5 779.1,385.5 779.9,385.5 780.1,382.5 780.9,382.5 781.1,382.5 781.9,382.5 782.1,384.5 782.9,384.5 783.1,384.5 783.9,384.5 784.1,384.5 784.9,384.5 785.1,383.5 785.9,383.5 786.1,383.5 786.9,383.5 787.1,385.5 787.9,385.5 788.1,385.5 788.9,385.5 789.1,383.5 789.9,383.5 790.1,386.5 790.9,386.5 791.1,381.5 791.9,381.5 792.1,384.5 792.9,384.5 793.1,384.5 793.9,384.5 794.1,384.5 794.9,384.5 795.1,384.5 795.9,384.5 796.1,383.5 796.9,383.5 797.1,383.5 797.9,383.5 798.1,383.5 798.9,383.5 799.1,383.5 799.9,383.5 800.1,383.5 800.9,383.5 801.1,383.5 801.9,383.5 802.1,383.5 802.9,383.5 803.1,388.5 803.9,388.5 804.1,388.5 804.9,388.5 805.1,386.5 805.9,386.5 806.1,383.5 806.9,383.5 807.1,384.5 807.9,384.5 808.1,387.5 808.9,387.5 809.1,384.5 809.9,384.5 810.1,384.5 810.9,384.5 811.1,384.5 811.9,384.5 812.1,384.5 812.9,384.5 813.1,384.5 813.9,384.5 814.1,386.5 814.9,386.5 815.1,381.5 815.9,381.5 816.1,386.5 816.9,386.5 817.1,384.5 817.9,384.5 818.1,384.5 818.9,384.5 819.1,384.5 819.9,384.5 820.1,386.5 820.9,386.5 821.1,386.5 821.9,386.5 822.1,386.5 822.9,386.5 823.1,386.5 823.9,386.5 824.1,385.5 824.9,385.5 825.1,385.5 825.9,385.5 826.1,385.5 826.9,385.5 827.1,386.5 827.9,386.5 828.1,380.5 828.9,380.5 829.1,384.5 829.9,384.5 830.1,384.5 830.9,384.5 831.1,384.5 831.9,384.5 832.1,380.5 832.9,380.5 833.1,378.5 833.9,378.5 834.1,374.5 834.9,374.5 835.1,374.5 835.9,374.5 836.1,374.5 836.9,374.5 837.1,375.5 837.9,375.5 838.1,374.5 838.9,374.5 839.1,375.5 839.9,375.5 840.1,377.5 840.9,377.5 841.1,378.5 841.9,378.5 842.1,376.5 842.9,376.5 843.1,380.5 843.9,380.5 844.1,383.5 844.9,383.5 845.1,381.5 845.9,381.5 846.1,384.5 846.9,384.5 847.1,385.5 847.9,385.5 848.1,387.5 848.9,387.5 849.1,383.5 849.9,383.5 850.1,385.5 850.9,385.5 851.1,385.5 851.9,385.5 852.1,385.5 852.9,385.5 853.1,385.5 853.9,385.5 854.1,385.5 854.9,385.5 855.1,385.5 855.9,385.5 856.1,385.5 856.9,385.5 857.1,384.5 857.9,384.5 858.1,382.5 858.9,382.5 859.1,384.5 859.9,384.5 860.1,383.5 860.9,383.5 861.1,382.5 861.9,382.5 862.1,384.5 862.9,384.5 863.1,384.5 863.9,384.5 864.1,386.5 864.9,386.5 865.1,387.5 865.9,387.5 866.1,387.5 866.9,387.5 867.1,386.5 867.9,386.5 868.1,387.5 868.9,387.5 869.1,386.5 869.9,386.5 870.1,384.5 870.9,384.5 871.1,384.5 871.9,384.5 872.1,384.5 872.9,384.5 873.1,384.5 873.9,384.5 874.1,385.5 874.9,385.5 875.1,386.5 875.9,386.5 876.1,384.5 876.9,384.5 877.1,388.5 877.9,388.5 878.1,381.5 878.9,381.5 879.1,385.5 879.9,385.5 880.1,385.5 880.9,385.5 881.1,386.5 881.9,386.5 882.1,385.5 882.9,385.5 883.1,385.5 883.9,385.5 884.1,385.5 884.9,385.5 885.1,385.5 885.9,385.5 886.1,389.5 886.9,389.5 887.1,389.5 887.9,389.5 888.1,391.5 888.9,391.5 889.1,395.5 889.9,395.5 890.1,397.5 890.9,397.5 891.1,398.5 891.9,398.5 892.1,397.5 892.9,397.5 893.1,398.5 893.9,398.5 894.1,400.5 894.9,400.5 895.1,404.5 895.9,404.5 896.1,406.5 896.9,406.5 897.1,403.5 897.9,403.5" fill="none" stroke="#00ffff" stroke-width="1.15" stroke-linejoin="round"/>
<path d="M672.5 340.0V359.0M674.5 290.0V379.0M678.5 313.0V379.0M680.5 335.7V377.0M753.5 361.8V383.7M758.5 359.6V383.8M755.5 340.0V366.0M778.5 315.0V385.1M818.5 331.5V384.3M822.5 371.0V386.1M846.5 314.3V384.9M870.5 331.0V384.4M878.5 362.0V381.6" stroke="#00ffff" stroke-width="1" fill="none" shape-rendering="crispEdges"/>
<polyline points="-6.5,321.7 11.1,319.8 26.3,320.9 39.7,322.5 51.8,321.5 62.7,320.6 72.6,319.1 81.7,321.9 90.2,324.8 98.1,292.0 105.4,264.0 112.3,148.5 118.9,68.0 125.0,34.3 130.9,19.4 136.5,19.4 141.8,34.3 146.8,68.0 151.7,148.5 156.4,323.3 160.8,325.2 165.1,325.9 169.3,325.9 173.3,325.9 177.2,328.3 180.9,328.3 184.5,325.9 188.0,314.2 191.5,304.1 194.8,307.0 198.0,320.7 201.1,328.5 204.2,328.5 207.1,318.0 210.0,303.0 212.8,297.2 215.6,305.7 218.3,322.6 220.9,340.9 223.5,342.2 226.0,340.3 228.4,333.0 230.8,326.6 233.2,307.0 235.5,275.0 237.7,254.8 240.0,262.0 242.1,292.0 244.3,316.0 246.4,328.5 248.4,333.0 250.4,328.5 252.4,327.2 254.4,327.9 256.3,322.6 258.2,316.1 260.0,316.4 261.9,324.5 263.7,327.0 265.4,328.1 267.2,328.4 268.9,329.0 270.6,330.9 272.2,330.1 273.9,329.9 275.5,327.4 277.1,325.1 278.7,324.9 280.2,327.2 281.8,328.5 283.3,327.4 284.8,328.5 286.2,328.3 287.7,326.3 289.1,325.5 290.5,322.1 291.9,318.8 293.3,312.7 294.7,284.8 296.0,272.9 297.4,276.4 298.7,296.8 300.0,325.6 301.3,333.4 302.6,330.1 303.8,327.8 305.1,327.3 306.3,327.4 307.5,328.6 308.7,328.5 309.9,330.1 311.1,330.4 312.3,327.8 313.4,324.4 314.6,324.3 315.7,324.6 316.9,327.0 318.0,328.0 319.1,326.8 320.2,326.3 321.2,327.6 322.3,328.9 323.4,328.8 324.4,326.7 325.5,326.0 326.5,327.6 327.5,330.8 328.5,334.4 329.5,332.2 330.5,332.2 331.5,331.4 332.5,329.6 333.5,327.8 334.4,327.6 335.4,327.7 336.4,328.4 337.3,328.1 338.2,329.1 339.1,328.2 340.1,331.2 341.0,332.5 341.9,333.9 342.8,335.8 343.7,331.0 344.5,326.5 345.4,324.3 346.3,324.6 347.1,324.4 348.0,323.4 348.8,324.0 349.7,326.2 350.5,327.3 351.4,329.7 352.2,326.2 353.0,326.2 353.8,323.6 354.6,325.8 355.4,328.2 356.2,332.2 357.0,333.6 357.8,334.6 358.6,334.1 359.3,329.5 360.1,326.8 360.9,324.8 361.6,326.2 362.4,326.7 363.1,328.5 363.9,328.5 364.6,332.8 365.4,333.3 366.1,332.9 366.8,332.1 367.5,330.6 368.2,329.5 369.0,327.6 370.5,334.8 371.5,338.6 372.5,330.1 373.5,334.5 374.5,334.7 375.5,330.1 376.5,325.3 377.5,324.9 378.5,327.6 379.5,328.6 380.5,328.0 381.5,328.6 382.5,332.3 383.5,332.3 384.5,332.6 385.5,313.6 386.5,296.5 387.5,323.6 388.5,325.2 389.5,324.9 390.5,324.4 391.5,326.1 392.5,327.1 393.5,332.2 394.5,337.7 395.5,333.3 396.5,329.7 397.5,325.9 398.5,327.2 399.5,331.5 400.5,329.6 401.5,329.7 402.5,328.3 403.5,326.7 404.5,328.3 405.5,309.6 406.5,329.1 407.5,330.0 408.5,330.2 409.5,330.4 410.5,330.7 411.5,329.1 412.5,330.7 413.5,330.7 414.5,332.7 415.5,331.7 416.5,329.0 417.5,327.5 418.5,330.5 419.5,332.3 420.5,333.3 421.5,329.8 422.5,330.4 423.5,330.8 424.5,330.1 425.5,329.6 426.5,328.7 427.5,326.2 428.5,324.9 429.5,327.1 430.5,334.4 431.5,341.0 432.5,333.6 433.5,333.1 434.5,332.3 435.5,327.9 436.5,309.6 437.5,337.0 438.5,333.9 439.5,328.6 440.5,328.0 441.5,333.7 442.5,331.6 443.5,332.2 444.5,330.9 445.5,328.0 446.5,335.9 447.5,335.5 448.5,307.6 449.5,330.9 450.5,328.8 451.5,326.0 452.5,327.8 453.5,330.3 454.5,332.4 455.5,331.3 456.5,330.0 457.5,331.7 458.5,327.5 459.5,330.6 460.5,331.4 461.5,326.7 462.5,322.2 463.5,324.4 464.5,328.1 465.5,330.1 466.5,331.5 467.5,325.6 468.5,327.0 469.5,328.9 470.5,326.7 471.5,339.0 472.5,329.2 473.5,333.2 474.5,329.5 475.5,321.3 476.5,325.6 477.5,327.2 478.5,333.0 479.5,328.0 480.5,326.6 481.5,330.3 482.5,326.1 483.5,335.9 484.5,324.5 485.5,325.1 486.5,328.1 487.5,329.9 488.5,327.9 489.5,327.0 490.5,321.6 491.5,324.4 492.5,324.7 493.5,324.9 494.5,327.7 495.5,325.4 496.5,328.2 497.5,326.4 498.5,325.4 499.5,326.5 500.5,327.3 501.5,328.3 502.5,325.0 503.5,325.6 504.5,322.8 505.5,330.1 506.5,329.8 507.5,325.7 508.5,325.0 509.5,323.1 510.5,326.6 511.5,326.6 512.5,331.5 513.5,326.7 514.5,340.5 515.5,320.2 516.5,333.6 517.5,326.6 518.5,322.2 519.5,326.5 520.5,322.2" fill="none" stroke="#ff00ff" stroke-width="1.35" stroke-linejoin="round"/>
<polyline points="520.1,322.5 520.9,322.5 521.1,334.5 521.9,334.5 522.1,328.5 522.9,328.5 523.1,327.5 523.9,327.5 524.1,325.5 524.9,325.5 525.1,321.5 525.9,321.5 526.1,325.5 526.9,325.5 527.1,322.5 527.9,322.5 528.1,327.5 528.9,327.5 529.1,321.5 529.9,321.5 530.1,323.5 530.9,323.5 531.1,328.5 531.9,328.5 532.1,329.5 532.9,329.5 533.1,323.5 533.9,323.5 534.1,322.5 534.9,322.5 535.1,341.5 535.9,341.5 536.1,327.5 536.9,327.5 537.1,323.5 537.9,323.5 538.1,324.5 538.9,324.5 539.1,324.5 539.9,324.5 540.1,323.5 540.9,323.5 541.1,324.5 541.9,324.5 542.1,326.5 542.9,326.5 543.1,327.5 543.9,327.5 544.1,326.5 544.9,326.5 545.1,325.5 545.9,325.5 546.1,325.5 546.9,325.5 547.1,323.5 547.9,323.5 548.1,325.5 548.9,325.5 549.1,322.5 549.9,322.5 550.1,321.5 550.9,321.5 551.1,326.5 551.9,326.5 552.1,326.5 552.9,326.5 553.1,327.5 553.9,327.5 554.1,328.5 554.9,328.5 555.1,325.5 555.9,325.5 556.1,323.5 556.9,323.5 557.1,325.5 557.9,325.5 558.1,324.5 558.9,324.5 559.1,322.5 559.9,322.5 560.1,321.5 560.9,321.5 561.1,321.5 561.9,321.5 562.1,324.5 562.9,324.5 563.1,325.5 563.9,325.5 564.1,323.5 564.9,323.5 565.1,327.5 565.9,327.5 566.1,325.5 566.9,325.5 567.1,326.5 567.9,326.5 568.1,327.5 568.9,327.5 569.1,323.5 569.9,323.5 570.1,320.5 570.9,320.5 571.1,326.5 571.9,326.5 572.1,328.5 572.9,328.5 573.1,327.5 573.9,327.5 574.1,331.5 574.9,331.5 575.1,326.5 575.9,326.5 576.1,325.5 576.9,325.5 577.1,320.5 577.9,320.5 578.1,326.5 578.9,326.5 579.1,324.5 579.9,324.5 580.1,324.5 580.9,324.5 581.1,323.5 581.9,323.5 582.1,326.5 582.9,326.5 583.1,326.5 583.9,326.5 584.1,327.5 584.9,327.5 585.1,321.5 585.9,321.5 586.1,323.5 586.9,323.5 587.1,320.5 587.9,320.5 588.1,323.5 588.9,323.5 589.1,325.5 589.9,325.5 590.1,327.5 590.9,327.5 591.1,325.5 591.9,325.5 592.1,325.5 592.9,325.5 593.1,326.5 593.9,326.5 594.1,321.5 594.9,321.5 595.1,324.5 595.9,324.5 596.1,323.5 596.9,323.5 597.1,328.5 597.9,328.5 598.1,321.5 598.9,321.5 599.1,324.5 599.9,324.5 600.1,325.5 600.9,325.5 601.1,324.5 601.9,324.5 602.1,324.5 602.9,324.5 603.1,324.5 603.9,324.5 604.1,324.5 604.9,324.5 605.1,321.5 605.9,321.5 606.1,323.5 606.9,323.5 607.1,329.5 607.9,329.5 608.1,325.5 608.9,325.5 609.1,324.5 609.9,324.5 610.1,324.5 610.9,324.5 611.1,324.5 611.9,324.5 612.1,320.5 612.9,320.5 613.1,324.5 613.9,324.5 614.1,324.5 614.9,324.5 615.1,318.5 615.9,318.5 616.1,322.5 616.9,322.5 617.1,323.5 617.9,323.5 618.1,322.5 618.9,322.5 619.1,323.5 619.9,323.5 620.1,325.5 620.9,325.5 621.1,323.5 621.9,323.5 622.1,327.5 622.9,327.5 623.1,323.5 623.9,323.5 624.1,323.5 624.9,323.5 625.1,324.5 625.9,324.5 626.1,324.5 626.9,324.5 627.1,324.5 627.9,324.5 628.1,324.5 628.9,324.5 629.1,323.5 629.9,323.5 630.1,323.5 630.9,323.5 631.1,325.5 631.9,325.5 632.1,326.5 632.9,326.5 633.1,326.5 633.9,326.5 634.1,324.5 634.9,324.5 635.1,324.5 635.9,324.5 636.1,323.5 636.9,323.5 637.1,325.5 637.9,325.5 638.1,327.5 638.9,327.5 639.1,323.5 639.9,323.5 640.1,324.5 640.9,324.5 641.1,328.5 641.9,328.5 642.1,324.5 642.9,324.5 643.1,323.5 643.9,323.5 644.1,323.5 644.9,323.5 645.1,321.5 645.9,321.5 646.1,323.5 646.9,323.5 647.1,320.5 647.9,320.5 648.1,323.5 648.9,323.5 649.1,321.5 649.9,321.5 650.1,325.5 650.9,325.5 651.1,326.5 651.9,326.5 652.1,326.5 652.9,326.5 653.1,322.5 653.9,322.5 654.1,322.5 654.9,322.5 655.1,322.5 655.9,322.5 656.1,326.5 656.9,326.5 657.1,327.5 657.9,327.5 658.1,321.5 658.9,321.5 659.1,318.5 659.9,318.5 660.1,327.5 660.9,327.5 661.1,319.5 661.9,319.5 662.1,323.5 662.9,323.5 663.1,323.5 663.9,323.5 664.1,323.5 664.9,323.5 665.1,324.5 665.9,324.5 666.1,328.5 666.9,328.5 667.1,324.5 667.9,324.5 668.1,323.5 668.9,323.5 669.1,323.5 669.9,323.5 670.1,323.5 670.9,323.5 671.1,323.5 671.9,323.5 672.1,325.5 672.9,325.5 673.1,323.5 673.9,323.5 674.1,323.5 674.9,323.5 675.1,318.5 675.9,318.5 676.1,300.5 676.9,300.5 677.1,323.5 677.9,323.5 678.1,326.5 678.9,326.5 679.1,326.5 679.9,326.5 680.1,324.5 680.9,324.5 681.1,318.5 681.9,318.5 682.1,323.5 682.9,323.5 683.1,323.5 683.9,323.5 684.1,323.5 684.9,323.5 685.1,323.5 685.9,323.5 686.1,319.5 686.9,319.5 687.1,323.5 687.9,323.5 688.1,323.5 688.9,323.5 689.1,323.5 689.9,323.5 690.1,319.5 690.9,319.5 691.1,319.5 691.9,319.5 692.1,323.5 692.9,323.5 693.1,320.5 693.9,320.5 694.1,323.5 694.9,323.5 695.1,323.5 695.9,323.5 696.1,323.5 696.9,323.5 697.1,323.5 697.9,323.5 698.1,323.5 698.9,323.5 699.1,320.5 699.9,320.5 700.1,317.5 700.9,317.5 701.1,315.5 701.9,315.5 702.1,324.5 702.9,324.5 703.1,324.5 703.9,324.5 704.1,319.5 704.9,319.5 705.1,323.5 705.9,323.5 706.1,323.5 706.9,323.5 707.1,323.5 707.9,323.5 708.1,317.5 708.9,317.5 709.1,316.5 709.9,316.5 710.1,316.5 710.9,316.5 711.1,320.5 711.9,320.5 712.1,323.5 712.9,323.5 713.1,318.5 713.9,318.5 714.1,323.5 714.9,323.5 715.1,323.5 715.9,323.5 716.1,322.5 716.9,322.5 717.1,322.5 717.9,322.5 718.1,322.5 718.9,322.5 719.1,323.5 719.9,323.5 720.1,323.5 720.9,323.5 721.1,323.5 721.9,323.5 722.1,323.5 722.9,323.5 723.1,325.5 723.9,325.5 724.1,323.5 724.9,323.5 725.1,323.5 725.9,323.5 726.1,323.5 726.9,323.5 727.1,323.5 727.9,323.5 728.1,323.5 728.9,323.5 729.1,323.5 729.9,323.5 730.1,326.5 730.9,326.5 731.1,323.5 731.9,323.5 732.1,323.5 732.9,323.5 733.1,323.5 733.9,323.5 734.1,320.5 734.9,320.5 735.1,323.5 735.9,323.5 736.1,323.5 736.9,323.5 737.1,323.5 737.9,323.5 738.1,323.5 738.9,323.5 739.1,323.5 739.9,323.5 740.1,320.5 740.9,320.5 741.1,323.5 741.9,323.5 742.1,323.5 742.9,323.5 743.1,323.5 743.9,323.5 744.1,323.5 744.9,323.5 745.1,324.5 745.9,324.5 746.1,319.5 746.9,319.5 747.1,323.5 747.9,323.5 748.1,323.5 748.9,323.5 749.1,323.5 749.9,323.5 750.1,323.5 750.9,323.5 751.1,323.5 751.9,323.5 752.1,318.5 752.9,318.5 753.1,323.5 753.9,323.5 754.1,323.5 754.9,323.5 755.1,319.5 755.9,319.5 756.1,320.5 756.9,320.5 757.1,320.5 757.9,320.5 758.1,323.5 758.9,323.5 759.1,323.5 759.9,323.5 760.1,322.5 760.9,322.5 761.1,322.5 761.9,322.5 762.1,322.5 762.9,322.5 763.1,322.5 763.9,322.5 764.1,318.5 764.9,318.5 765.1,322.5 765.9,322.5 766.1,314.5 766.9,314.5 767.1,323.5 767.9,323.5 768.1,323.5 768.9,323.5 769.1,323.5 769.9,323.5 770.1,324.5 770.9,324.5 771.1,321.5 771.9,321.5 772.1,324.5 772.9,324.5 773.1,323.5 773.9,323.5 774.1,323.5 774.9,323.5 775.1,323.5 775.9,323.5 776.1,321.5 776.9,321.5 777.1,323.5 777.9,323.5 778.1,318.5 778.9,318.5 779.1,323.5 779.9,323.5 780.1,319.5 780.9,319.5 781.1,322.5 781.9,322.5 782.1,322.5 782.9,322.5 783.1,316.5 783.9,316.5 784.1,322.5 784.9,322.5 785.1,318.5 785.9,318.5 786.1,325.5 786.9,325.5 787.1,317.5 787.9,317.5 788.1,322.5 788.9,322.5 789.1,322.5 789.9,322.5 790.1,322.5 790.9,322.5 791.1,317.5 791.9,317.5 792.1,322.5 792.9,322.5 793.1,322.5 793.9,322.5 794.1,322.5 794.9,322.5 795.1,322.5 795.9,322.5 796.1,322.5 796.9,322.5 797.1,324.5 797.9,324.5 798.1,319.5 798.9,319.5 799.1,322.5 799.9,322.5 800.1,320.5 800.9,320.5 801.1,322.5 801.9,322.5 802.1,322.5 802.9,322.5 803.1,320.5 803.9,320.5 804.1,322.5 804.9,322.5 805.1,319.5 805.9,319.5 806.1,322.5 806.9,322.5 807.1,322.5 807.9,322.5 808.1,322.5 808.9,322.5 809.1,324.5 809.9,324.5 810.1,324.5 810.9,324.5 811.1,320.5 811.9,320.5 812.1,322.5 812.9,322.5 813.1,322.5 813.9,322.5 814.1,322.5 814.9,322.5 815.1,322.5 815.9,322.5 816.1,322.5 816.9,322.5 817.1,322.5 817.9,322.5 818.1,322.5 818.9,322.5 819.1,322.5 819.9,322.5 820.1,322.5 820.9,322.5 821.1,322.5 821.9,322.5 822.1,322.5 822.9,322.5 823.1,322.5 823.9,322.5 824.1,322.5 824.9,322.5 825.1,322.5 825.9,322.5 826.1,322.5 826.9,322.5 827.1,322.5 827.9,322.5 828.1,322.5 828.9,322.5 829.1,322.5 829.9,322.5 830.1,321.5 830.9,321.5 831.1,321.5 831.9,321.5 832.1,321.5 832.9,321.5 833.1,323.5 833.9,323.5 834.1,323.5 834.9,323.5 835.1,322.5 835.9,322.5 836.1,322.5 836.9,322.5 837.1,322.5 837.9,322.5 838.1,322.5 838.9,322.5 839.1,320.5 839.9,320.5 840.1,322.5 840.9,322.5 841.1,317.5 841.9,317.5 842.1,319.5 842.9,319.5 843.1,322.5 843.9,322.5 844.1,322.5 844.9,322.5 845.1,322.5 845.9,322.5 846.1,322.5 846.9,322.5 847.1,322.5 847.9,322.5 848.1,320.5 848.9,320.5 849.1,317.5 849.9,317.5 850.1,316.5 850.9,316.5 851.1,319.5 851.9,319.5 852.1,314.5 852.9,314.5 853.1,315.5 853.9,315.5 854.1,318.5 854.9,318.5 855.1,318.5 855.9,318.5 856.1,318.5 856.9,318.5 857.1,317.5 857.9,317.5 858.1,317.5 858.9,317.5 859.1,317.5 859.9,317.5 860.1,314.5 860.9,314.5 861.1,316.5 861.9,316.5 862.1,316.5 862.9,316.5 863.1,317.5 863.9,317.5 864.1,314.5 864.9,314.5 865.1,318.5 865.9,318.5 866.1,315.5 866.9,315.5 867.1,319.5 867.9,319.5 868.1,320.5 868.9,320.5 869.1,322.5 869.9,322.5 870.1,316.5 870.9,316.5 871.1,316.5 871.9,316.5 872.1,321.5 872.9,321.5 873.1,323.5 873.9,323.5 874.1,323.5 874.9,323.5 875.1,322.5 875.9,322.5 876.1,322.5 876.9,322.5 877.1,323.5 877.9,323.5 878.1,323.5 878.9,323.5 879.1,324.5 879.9,324.5 880.1,324.5 880.9,324.5 881.1,324.5 881.9,324.5 882.1,321.5 882.9,321.5 883.1,324.5 883.9,324.5 884.1,324.5 884.9,324.5 885.1,324.5 885.9,324.5 886.1,325.5 886.9,325.5 887.1,322.5 887.9,322.5 888.1,322.5 888.9,322.5 889.1,326.5 889.9,326.5 890.1,329.5 890.9,329.5 891.1,330.5 891.9,330.5 892.1,335.5 892.9,335.5 893.1,337.5 893.9,337.5 894.1,340.5 894.9,340.5 895.1,336.5 895.9,336.5 896.1,344.5 896.9,344.5 897.1,346.5 897.9,346.5" fill="none" stroke="#ff00ff" stroke-width="1.15" stroke-linejoin="round"/>
<path d="M819.5 309.4V322.2M642.5 315.0V324.0" stroke="#ff00ff" stroke-width="1" fill="none" shape-rendering="crispEdges"/>
<rect x="676" y="54" width="1" height="272" fill="#ff00ff" shape-rendering="crispEdges"/>
<rect x="677" y="198" width="1" height="128" fill="#ff00ff" shape-rendering="crispEdges"/>
<rect x="675" y="310" width="3" height="13" fill="#ff00ff" shape-rendering="crispEdges"/>
<g shape-rendering="crispEdges"><rect x="12.85" y="12.85" width="22.3" height="22.3" rx="2.8" ry="2.8" fill="#000" stroke="#fff" stroke-width="1.7" shape-rendering="auto"/><path d="M18.5 15V33M22.5 15V33M25.5 15V33M29.5 15V33M31.5 15V33M15 16.5H33M15 21.5H33M15 26.5H33" stroke="#6a6a6a" stroke-width="1" fill="none"/><path d="M15.5 32.5V31.5M16.5 32V30M17.5 32.5V32M18.5 32.5V32M19.5 32.5V32M20.5 32.5V31M21.5 32.5V30M22.5 33V15M23.5 32.5V30M24.5 32.5V31.5M25.5 32.5V32M26.5 32.5V31.5M27.5 32.5V31M28.5 33V24M29.5 32.5V31.5M30.5 32.5V31M31.5 33V27M32.5 32.5V32" stroke="#00ff00" stroke-width="1" fill="none"/><path d="M15 32.5H33" stroke="#00ff00" stroke-width="1"/></g>
</g>
<text transform="translate(898.5,42) scale(0.806,1)" fill="#000" stroke="#000" stroke-width="0.25" text-anchor="start">-12</text>
<text transform="translate(898.5,61) scale(0.806,1)" fill="#000" stroke="#000" stroke-width="0.25" text-anchor="start">-18</text>
<text transform="translate(898.5,79) scale(0.806,1)" fill="#000" stroke="#000" stroke-width="0.25" text-anchor="start">-24</text>
<text transform="translate(898.5,97) scale(0.806,1)" fill="#000" stroke="#000" stroke-width="0.25" text-anchor="start">-30</text>
<text transform="translate(898.5,115) scale(0.806,1)" fill="#000" stroke="#000" stroke-width="0.25" text-anchor="start">-36</text>
<text transform="translate(898.5,134) scale(0.806,1)" fill="#000" stroke="#000" stroke-width="0.25" text-anchor="start">-42</text>
<text transform="translate(898.5,152) scale(0.806,1)" fill="#000" stroke="#000" stroke-width="0.25" text-anchor="start">-48</text>
<text transform="translate(898.5,170) scale(0.806,1)" fill="#000" stroke="#000" stroke-width="0.25" text-anchor="start">-54</text>
<text transform="translate(898.5,188) scale(0.806,1)" fill="#000" stroke="#000" stroke-width="0.25" text-anchor="start">-60</text>
<text transform="translate(898.5,207) scale(0.806,1)" fill="#000" stroke="#000" stroke-width="0.25" text-anchor="start">-66</text>
<text transform="translate(898.5,225) scale(0.806,1)" fill="#000" stroke="#000" stroke-width="0.25" text-anchor="start">-72</text>
<text transform="translate(898.5,243) scale(0.806,1)" fill="#000" stroke="#000" stroke-width="0.25" text-anchor="start">-78</text>
<text transform="translate(898.5,261) scale(0.806,1)" fill="#000" stroke="#000" stroke-width="0.25" text-anchor="start">-84</text>
<text transform="translate(898.5,280) scale(0.806,1)" fill="#000" stroke="#000" stroke-width="0.25" text-anchor="start">-90</text>
<text transform="translate(898.5,298) scale(0.806,1)" fill="#000" stroke="#000" stroke-width="0.25" text-anchor="start">-96</text>
<text transform="translate(898.5,316) scale(0.806,1)" fill="#000" stroke="#000" stroke-width="0.25" text-anchor="start">-102</text>
<text transform="translate(898.5,334) scale(0.806,1)" fill="#000" stroke="#000" stroke-width="0.25" text-anchor="start">-108</text>
<text transform="translate(898.5,352) scale(0.806,1)" fill="#000" stroke="#000" stroke-width="0.25" text-anchor="start">-114</text>
<text transform="translate(898.5,371) scale(0.806,1)" fill="#000" stroke="#000" stroke-width="0.25" text-anchor="start">-120</text>
<text transform="translate(898.5,389) scale(0.806,1)" fill="#000" stroke="#000" stroke-width="0.25" text-anchor="start">-126</text>
<text transform="translate(898.5,407) scale(0.806,1)" fill="#000" stroke="#000" stroke-width="0.25" text-anchor="start">-132</text>
<text transform="translate(898.5,425) scale(0.806,1)" fill="#000" stroke="#000" stroke-width="0.25" text-anchor="start">-138</text>
<text transform="translate(898.5,444) scale(0.806,1)" fill="#000" stroke="#000" stroke-width="0.25" text-anchor="start">-144</text>
<text transform="translate(898.5,462) scale(0.806,1)" fill="#000" stroke="#000" stroke-width="0.25" text-anchor="start">-150</text>
<text transform="translate(898.5,480) scale(0.806,1)" fill="#000" stroke="#000" stroke-width="0.25" text-anchor="start">-156</text>
<text transform="translate(898.5,498) scale(0.806,1)" fill="#000" stroke="#000" stroke-width="0.25" text-anchor="start">-162</text>
<text transform="translate(898.5,517) scale(0.806,1)" fill="#000" stroke="#000" stroke-width="0.25" text-anchor="start">-168</text>
<text transform="translate(898.5,535) scale(0.806,1)" fill="#000" stroke="#000" stroke-width="0.25" text-anchor="start">-174</text>
<text transform="translate(899.5,12) scale(0.806,1)" fill="#000" stroke="#000" stroke-width="0.25" text-anchor="start">dB</text>
<text transform="translate(897.5,562) scale(0.806,1)" fill="#000" stroke="#000" stroke-width="0.25" text-anchor="start">Hz</text>
<text transform="translate(54.6,561) scale(0.806,1)" fill="#000" stroke="#000" stroke-width="0.25" text-anchor="middle">30</text>
<text transform="translate(112.6,561) scale(0.806,1)" fill="#000" stroke="#000" stroke-width="0.25" text-anchor="middle">50</text>
<text transform="translate(192.6,561) scale(0.806,1)" fill="#000" stroke="#000" stroke-width="0.25" text-anchor="middle">100</text>
<text transform="translate(271.6,561) scale(0.806,1)" fill="#000" stroke="#000" stroke-width="0.25" text-anchor="middle">200</text>
<text transform="translate(317.6,561) scale(0.806,1)" fill="#000" stroke="#000" stroke-width="0.25" text-anchor="middle">300</text>
<text transform="translate(375.6,561) scale(0.806,1)" fill="#000" stroke="#000" stroke-width="0.25" text-anchor="middle">500</text>
<text transform="translate(454,561) scale(0.806,1)" fill="#000" stroke="#000" stroke-width="0.25" text-anchor="middle">1K</text>
<text transform="translate(533,561) scale(0.806,1)" fill="#000" stroke="#000" stroke-width="0.25" text-anchor="middle">2K</text>
<text transform="translate(580,561) scale(0.806,1)" fill="#000" stroke="#000" stroke-width="0.25" text-anchor="middle">3K</text>
<text transform="translate(638,561) scale(0.806,1)" fill="#000" stroke="#000" stroke-width="0.25" text-anchor="middle">5K</text>
<text transform="translate(717,561) scale(0.806,1)" fill="#000" stroke="#000" stroke-width="0.25" text-anchor="middle">10K</text>
<text transform="translate(796,561) scale(0.806,1)" fill="#000" stroke="#000" stroke-width="0.25" text-anchor="middle">20K</text>
<text transform="translate(842,561) scale(0.806,1)" fill="#000" stroke="#000" stroke-width="0.25" text-anchor="middle">30K</text>
</svg>
</body></html>
